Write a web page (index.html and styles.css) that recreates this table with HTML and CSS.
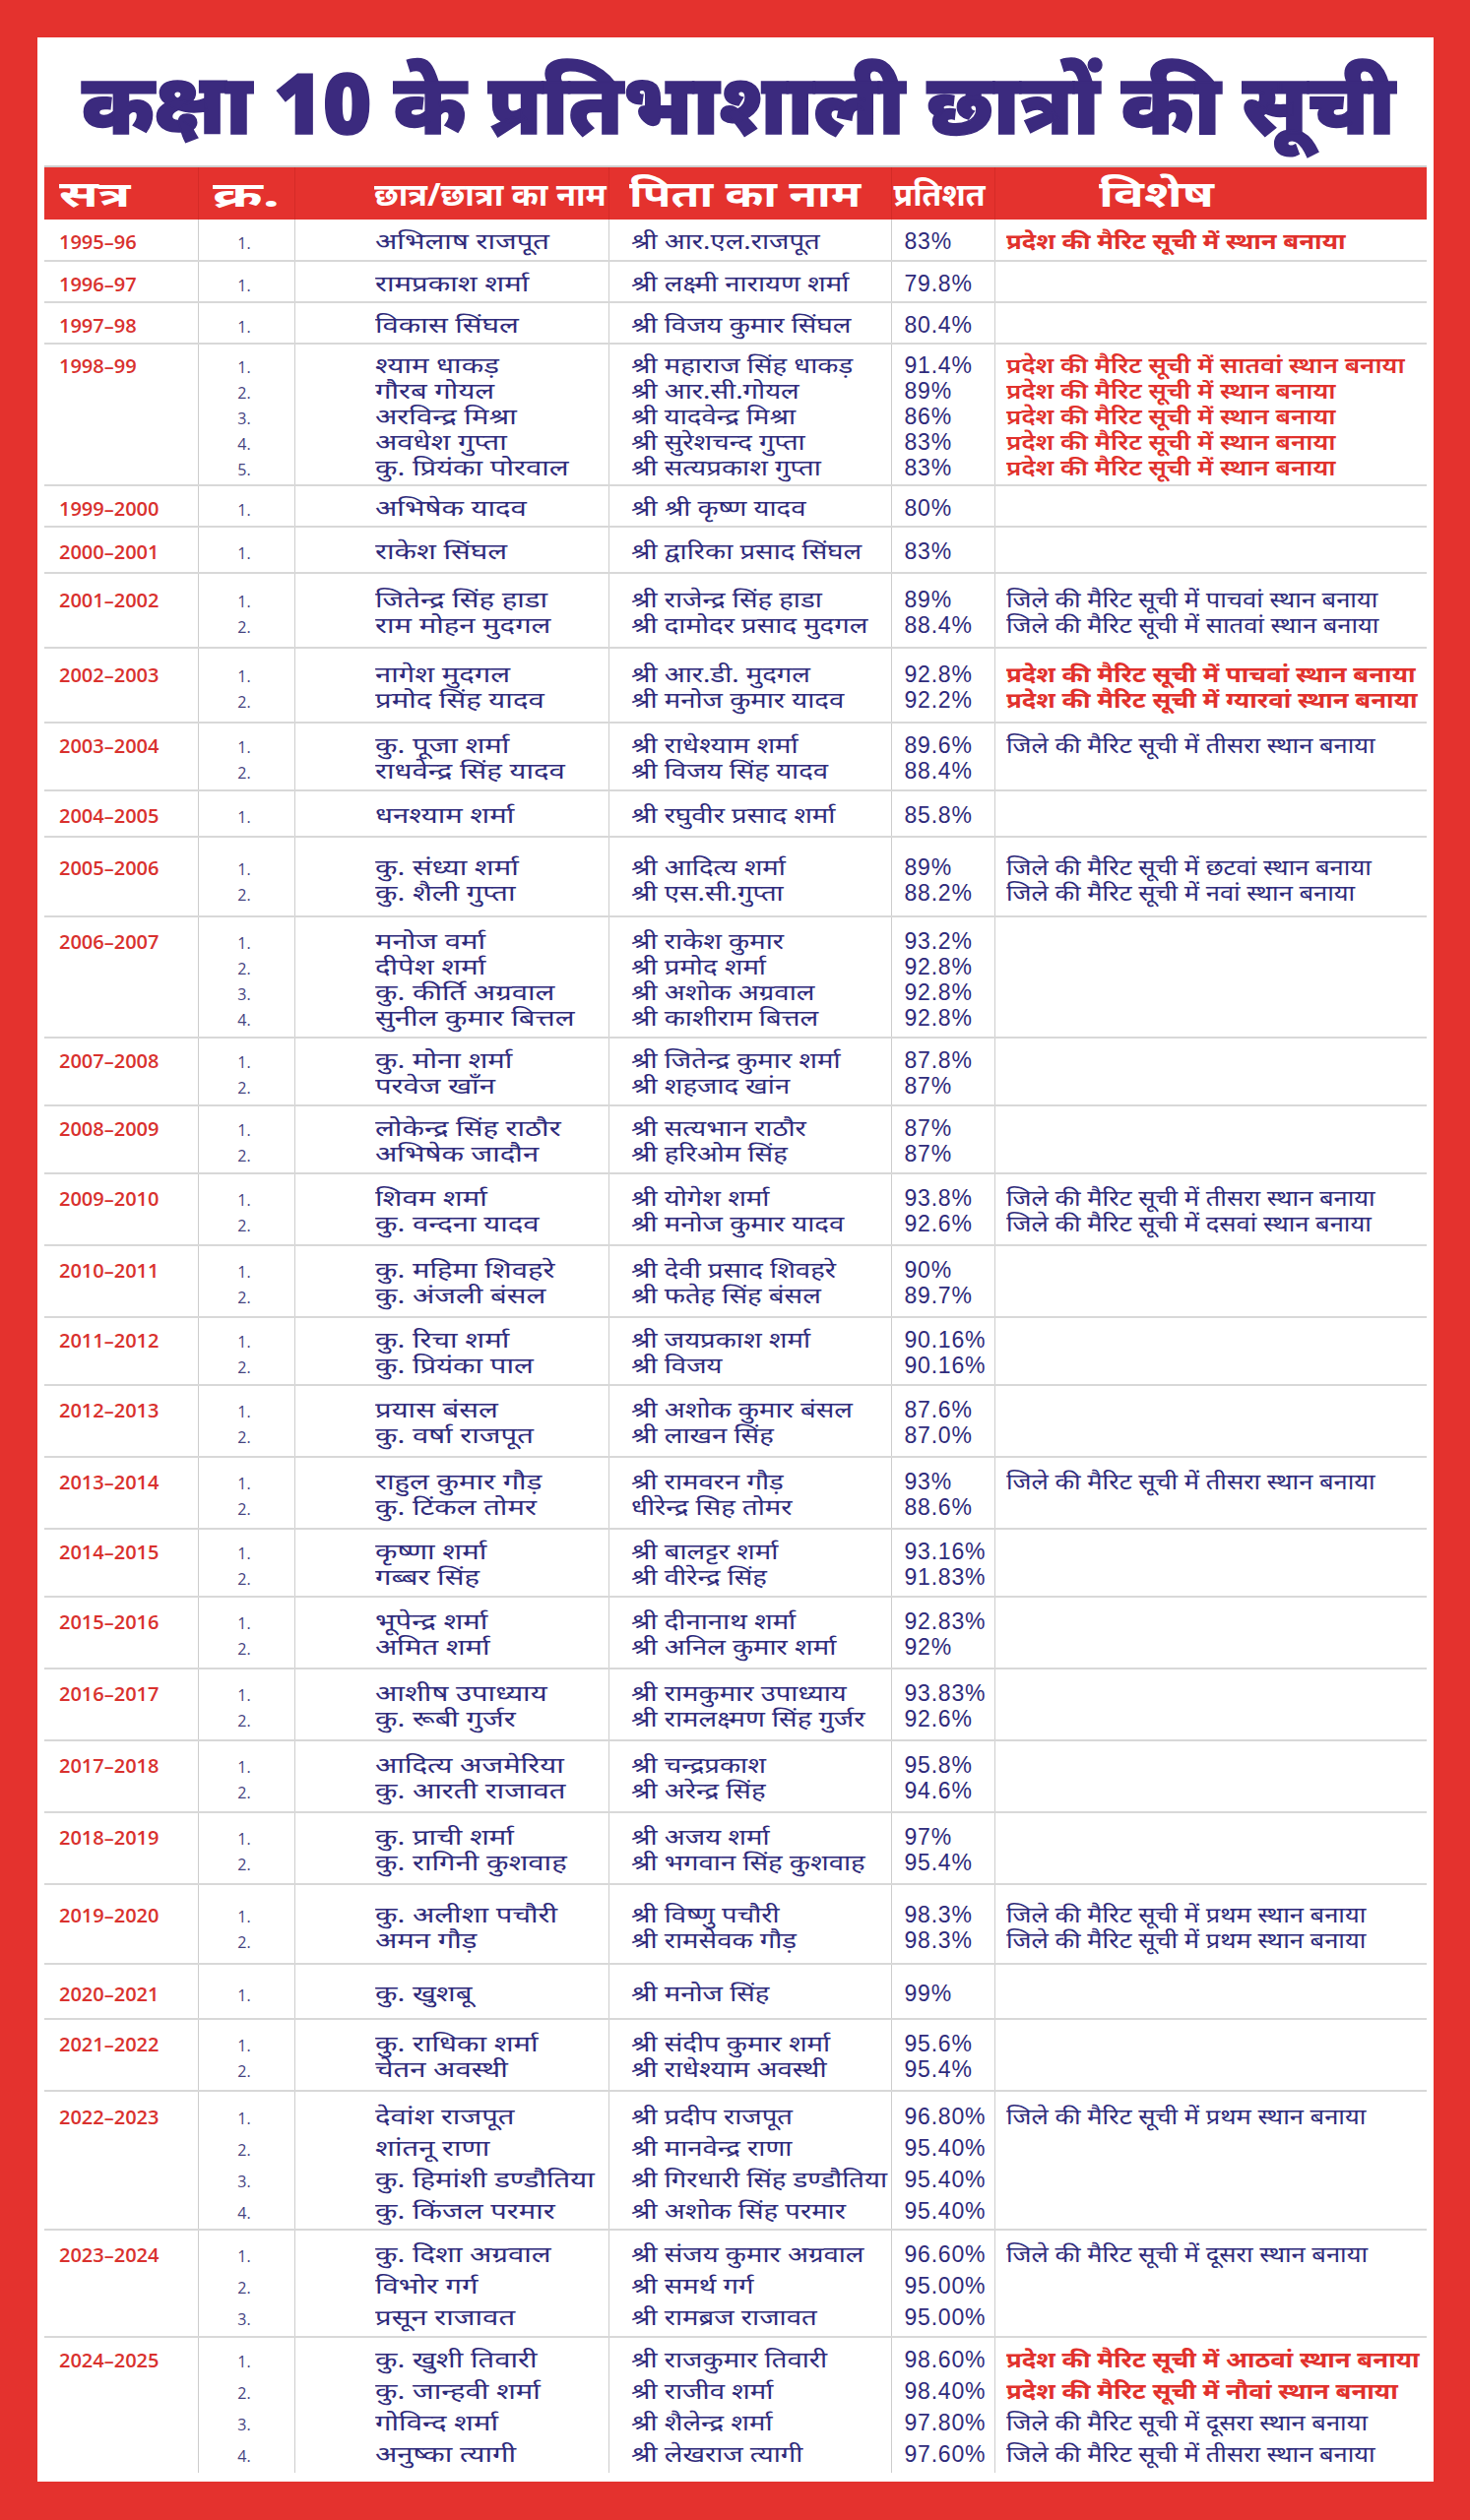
FILE: index.html
```html
<!DOCTYPE html>
<html lang="hi">
<head>
<meta charset="utf-8">
<title>कक्षा 10 के प्रतिभाशाली छात्रों की सूची</title>
<link rel="stylesheet" href="styles.css">
</head>
<body>
<div class="frame">
<div class="sheet">
<h1 class="title">कक्षा 10 के प्रतिभाशाली छात्रों की सूची</h1>
<table class="list">
<colgroup><col class="k1"><col class="k2"><col class="k3"><col class="k4"><col class="k5"><col class="k6"></colgroup>
<thead>
<tr><th class="hs"><span class="hx">सत्र</span></th><th class="hn"><span class="hx">क्र.</span></th><th class="hnm"><span class="hx">छात्र/छात्रा का नाम</span></th><th class="hf"><span class="hx">पिता का नाम</span></th><th class="hp"><span class="hx">प्रतिशत</span></th><th class="hr"><span class="hx">विशेष</span></th></tr>
</thead>
<tbody>
<tr class="r1"><td class="s">1995–96</td><td class="n"><div>1.</div></td><td class="nm"><div>अभिलाष राजपूत</div></td><td class="f"><div>श्री आर.एल.राजपूत</div></td><td class="p"><div>83%</div></td><td class="rm"><div class="pr">प्रदेश की मैरिट सूची में स्थान बनाया</div></td></tr>
<tr class="r1"><td class="s">1996–97</td><td class="n"><div>1.</div></td><td class="nm"><div>रामप्रकाश शर्मा</div></td><td class="f"><div>श्री लक्ष्मी नारायण शर्मा</div></td><td class="p"><div>79.8%</div></td><td class="rm"></td></tr>
<tr class="r1"><td class="s">1997–98</td><td class="n"><div>1.</div></td><td class="nm"><div>विकास सिंघल</div></td><td class="f"><div>श्री विजय कुमार सिंघल</div></td><td class="p"><div>80.4%</div></td><td class="rm"></td></tr>
<tr class="r5"><td class="s">1998–99</td><td class="n"><div>1.</div><div>2.</div><div>3.</div><div>4.</div><div>5.</div></td><td class="nm"><div>श्याम धाकड़</div><div>गौरब गोयल</div><div>अरविन्द्र मिश्रा</div><div>अवधेश गुप्ता</div><div>कु. प्रियंका पोरवाल</div></td><td class="f"><div>श्री महाराज सिंह धाकड़</div><div>श्री आर.सी.गोयल</div><div>श्री यादवेन्द्र मिश्रा</div><div>श्री सुरेशचन्द गुप्ता</div><div>श्री सत्यप्रकाश गुप्ता</div></td><td class="p"><div>91.4%</div><div>89%</div><div>86%</div><div>83%</div><div>83%</div></td><td class="rm"><div class="pr lite">प्रदेश की मैरिट सूची में सातवां स्थान बनाया</div><div class="pr lite">प्रदेश की मैरिट सूची में स्थान बनाया</div><div class="pr lite">प्रदेश की मैरिट सूची में स्थान बनाया</div><div class="pr lite">प्रदेश की मैरिट सूची में स्थान बनाया</div><div class="pr lite">प्रदेश की मैरिट सूची में स्थान बनाया</div></td></tr>
<tr class="r1"><td class="s">1999–2000</td><td class="n"><div>1.</div></td><td class="nm"><div>अभिषेक यादव</div></td><td class="f"><div>श्री श्री कृष्ण यादव</div></td><td class="p"><div>80%</div></td><td class="rm"></td></tr>
<tr class="r1m"><td class="s">2000–2001</td><td class="n"><div>1.</div></td><td class="nm"><div>राकेश सिंघल</div></td><td class="f"><div>श्री द्वारिका प्रसाद सिंघल</div></td><td class="p"><div>83%</div></td><td class="rm"></td></tr>
<tr class="r2x"><td class="s">2001–2002</td><td class="n"><div>1.</div><div>2.</div></td><td class="nm"><div>जितेन्द्र सिंह हाडा</div><div>राम मोहन मुदगल</div></td><td class="f"><div>श्री राजेन्द्र सिंह हाडा</div><div>श्री दामोदर प्रसाद मुदगल</div></td><td class="p"><div>89%</div><div>88.4%</div></td><td class="rm"><div class="ji">जिले की मैरिट सूची में पाचवां स्थान बनाया</div><div class="ji">जिले की मैरिट सूची में सातवां स्थान बनाया</div></td></tr>
<tr class="r2x"><td class="s">2002–2003</td><td class="n"><div>1.</div><div>2.</div></td><td class="nm"><div>नागेश मुदगल</div><div>प्रमोद सिंह यादव</div></td><td class="f"><div>श्री आर.डी. मुदगल</div><div>श्री मनोज कुमार यादव</div></td><td class="p"><div>92.8%</div><div>92.2%</div></td><td class="rm"><div class="pr">प्रदेश की मैरिट सूची में पाचवां स्थान बनाया</div><div class="pr">प्रदेश की मैरिट सूची में ग्यारवां स्थान बनाया</div></td></tr>
<tr class="r2s"><td class="s">2003–2004</td><td class="n"><div>1.</div><div>2.</div></td><td class="nm"><div>कु. पूजा शर्मा</div><div>राधवेन्द्र सिंह यादव</div></td><td class="f"><div>श्री राधेश्याम शर्मा</div><div>श्री विजय सिंह यादव</div></td><td class="p"><div>89.6%</div><div>88.4%</div></td><td class="rm"><div class="ji">जिले की मैरिट सूची में तीसरा स्थान बनाया</div></td></tr>
<tr class="r1m"><td class="s">2004–2005</td><td class="n"><div>1.</div></td><td class="nm"><div>धनश्याम शर्मा</div></td><td class="f"><div>श्री रघुवीर प्रसाद शर्मा</div></td><td class="p"><div>85.8%</div></td><td class="rm"></td></tr>
<tr class="r2l"><td class="s">2005–2006</td><td class="n"><div>1.</div><div>2.</div></td><td class="nm"><div>कु. संध्या शर्मा</div><div>कु. शैली गुप्ता</div></td><td class="f"><div>श्री आदित्य शर्मा</div><div>श्री एस.सी.गुप्ता</div></td><td class="p"><div>89%</div><div>88.2%</div></td><td class="rm"><div class="ji">जिले की मैरिट सूची में छटवां स्थान बनाया</div><div class="ji">जिले की मैरिट सूची में नवां स्थान बनाया</div></td></tr>
<tr class="r4"><td class="s">2006–2007</td><td class="n"><div>1.</div><div>2.</div><div>3.</div><div>4.</div></td><td class="nm"><div>मनोज वर्मा</div><div>दीपेश शर्मा</div><div>कु. कीर्ति अग्रवाल</div><div>सुनील कुमार बित्तल</div></td><td class="f"><div>श्री राकेश कुमार</div><div>श्री प्रमोद शर्मा</div><div>श्री अशोक अग्रवाल</div><div>श्री काशीराम बित्तल</div></td><td class="p"><div>93.2%</div><div>92.8%</div><div>92.8%</div><div>92.8%</div></td><td class="rm"></td></tr>
<tr class="r2s"><td class="s">2007–2008</td><td class="n"><div>1.</div><div>2.</div></td><td class="nm"><div>कु. मोना शर्मा</div><div>परवेज खाँन</div></td><td class="f"><div>श्री जितेन्द्र कुमार शर्मा</div><div>श्री शहजाद खांन</div></td><td class="p"><div>87.8%</div><div>87%</div></td><td class="rm"></td></tr>
<tr class="r2s"><td class="s">2008–2009</td><td class="n"><div>1.</div><div>2.</div></td><td class="nm"><div>लोकेन्द्र सिंह राठौर</div><div>अभिषेक जादौन</div></td><td class="f"><div>श्री सत्यभान राठौर</div><div>श्री हरिओम सिंह</div></td><td class="p"><div>87%</div><div>87%</div></td><td class="rm"></td></tr>
<tr class="r2"><td class="s">2009–2010</td><td class="n"><div>1.</div><div>2.</div></td><td class="nm"><div>शिवम शर्मा</div><div>कु. वन्दना यादव</div></td><td class="f"><div>श्री योगेश शर्मा</div><div>श्री मनोज कुमार यादव</div></td><td class="p"><div>93.8%</div><div>92.6%</div></td><td class="rm"><div class="ji">जिले की मैरिट सूची में तीसरा स्थान बनाया</div><div class="ji">जिले की मैरिट सूची में दसवां स्थान बनाया</div></td></tr>
<tr class="r2"><td class="s">2010–2011</td><td class="n"><div>1.</div><div>2.</div></td><td class="nm"><div>कु. महिमा शिवहरे</div><div>कु. अंजली बंसल</div></td><td class="f"><div>श्री देवी प्रसाद शिवहरे</div><div>श्री फतेह सिंह बंसल</div></td><td class="p"><div>90%</div><div>89.7%</div></td><td class="rm"></td></tr>
<tr class="r2s"><td class="s">2011–2012</td><td class="n"><div>1.</div><div>2.</div></td><td class="nm"><div>कु. रिचा शर्मा</div><div>कु. प्रियंका पाल</div></td><td class="f"><div>श्री जयप्रकाश शर्मा</div><div>श्री विजय</div></td><td class="p"><div>90.16%</div><div>90.16%</div></td><td class="rm"></td></tr>
<tr class="r2"><td class="s">2012–2013</td><td class="n"><div>1.</div><div>2.</div></td><td class="nm"><div>प्रयास बंसल</div><div>कु. वर्षा राजपूत</div></td><td class="f"><div>श्री अशोक कुमार बंसल</div><div>श्री लाखन सिंह</div></td><td class="p"><div>87.6%</div><div>87.0%</div></td><td class="rm"></td></tr>
<tr class="r2"><td class="s">2013–2014</td><td class="n"><div>1.</div><div>2.</div></td><td class="nm"><div>राहुल कुमार गौड़</div><div>कु. टिंकल तोमर</div></td><td class="f"><div>श्री रामवरन गौड़</div><div>धीरेन्द्र सिह तोमर</div></td><td class="p"><div>93%</div><div>88.6%</div></td><td class="rm"><div class="ji">जिले की मैरिट सूची में तीसरा स्थान बनाया</div></td></tr>
<tr class="r2s"><td class="s">2014–2015</td><td class="n"><div>1.</div><div>2.</div></td><td class="nm"><div>कृष्णा शर्मा</div><div>गब्बर सिंह</div></td><td class="f"><div>श्री बालट्टर शर्मा</div><div>श्री वीरेन्द्र सिंह</div></td><td class="p"><div>93.16%</div><div>91.83%</div></td><td class="rm"></td></tr>
<tr class="r2"><td class="s">2015–2016</td><td class="n"><div>1.</div><div>2.</div></td><td class="nm"><div>भूपेन्द्र शर्मा</div><div>अमित शर्मा</div></td><td class="f"><div>श्री दीनानाथ शर्मा</div><div>श्री अनिल कुमार शर्मा</div></td><td class="p"><div>92.83%</div><div>92%</div></td><td class="rm"></td></tr>
<tr class="r2"><td class="s">2016–2017</td><td class="n"><div>1.</div><div>2.</div></td><td class="nm"><div>आशीष उपाध्याय</div><div>कु. रूबी गुर्जर</div></td><td class="f"><div>श्री रामकुमार उपाध्याय</div><div>श्री रामलक्ष्मण सिंह गुर्जर</div></td><td class="p"><div>93.83%</div><div>92.6%</div></td><td class="rm"></td></tr>
<tr class="r2"><td class="s">2017–2018</td><td class="n"><div>1.</div><div>2.</div></td><td class="nm"><div>आदित्य अजमेरिया</div><div>कु. आरती राजावत</div></td><td class="f"><div>श्री चन्द्रप्रकाश</div><div>श्री अरेन्द्र सिंह</div></td><td class="p"><div>95.8%</div><div>94.6%</div></td><td class="rm"></td></tr>
<tr class="r2"><td class="s">2018–2019</td><td class="n"><div>1.</div><div>2.</div></td><td class="nm"><div>कु. प्राची शर्मा</div><div>कु. रागिनी कुशवाह</div></td><td class="f"><div>श्री अजय शर्मा</div><div>श्री भगवान सिंह कुशवाह</div></td><td class="p"><div>97%</div><div>95.4%</div></td><td class="rm"></td></tr>
<tr class="r2l"><td class="s">2019–2020</td><td class="n"><div>1.</div><div>2.</div></td><td class="nm"><div>कु. अलीशा पचौरी</div><div>अमन गौड़</div></td><td class="f"><div>श्री विष्णु पचौरी</div><div>श्री रामसेवक गौड़</div></td><td class="p"><div>98.3%</div><div>98.3%</div></td><td class="rm"><div class="ji">जिले की मैरिट सूची में प्रथम स्थान बनाया</div><div class="ji">जिले की मैरिट सूची में प्रथम स्थान बनाया</div></td></tr>
<tr class="r1l"><td class="s">2020–2021</td><td class="n"><div>1.</div></td><td class="nm"><div>कु. खुशबू</div></td><td class="f"><div>श्री मनोज सिंह</div></td><td class="p"><div>99%</div></td><td class="rm"></td></tr>
<tr class="r2"><td class="s">2021–2022</td><td class="n"><div>1.</div><div>2.</div></td><td class="nm"><div>कु. राधिका शर्मा</div><div>चेतन अवस्थी</div></td><td class="f"><div>श्री संदीप कुमार शर्मा</div><div>श्री राधेश्याम अवस्थी</div></td><td class="p"><div>95.6%</div><div>95.4%</div></td><td class="rm"></td></tr>
<tr class="w4a"><td class="s">2022–2023</td><td class="n"><div>1.</div><div>2.</div><div>3.</div><div>4.</div></td><td class="nm"><div>देवांश राजपूत</div><div>शांतनू राणा</div><div>कु. हिमांशी डण्डौतिया</div><div>कु. किंजल परमार</div></td><td class="f"><div>श्री प्रदीप राजपूत</div><div>श्री मानवेन्द्र राणा</div><div>श्री गिरधारी सिंह डण्डौतिया</div><div>श्री अशोक सिंह परमार</div></td><td class="p"><div>96.80%</div><div>95.40%</div><div>95.40%</div><div>95.40%</div></td><td class="rm"><div class="ji">जिले की मैरिट सूची में प्रथम स्थान बनाया</div></td></tr>
<tr class="w3"><td class="s">2023–2024</td><td class="n"><div>1.</div><div>2.</div><div>3.</div></td><td class="nm"><div>कु. दिशा अग्रवाल</div><div>विभोर गर्ग</div><div>प्रसून राजावत</div></td><td class="f"><div>श्री संजय कुमार अग्रवाल</div><div>श्री समर्थ गर्ग</div><div>श्री रामब्रज राजावत</div></td><td class="p"><div>96.60%</div><div>95.00%</div><div>95.00%</div></td><td class="rm"><div class="ji">जिले की मैरिट सूची में दूसरा स्थान बनाया</div></td></tr>
<tr class="w4b"><td class="s">2024–2025</td><td class="n"><div>1.</div><div>2.</div><div>3.</div><div>4.</div></td><td class="nm"><div>कु. खुशी तिवारी</div><div>कु. जान्हवी शर्मा</div><div>गोविन्द शर्मा</div><div>अनुष्का त्यागी</div></td><td class="f"><div>श्री राजकुमार तिवारी</div><div>श्री राजीव शर्मा</div><div>श्री शैलेन्द्र शर्मा</div><div>श्री लेखराज त्यागी</div></td><td class="p"><div>98.60%</div><div>98.40%</div><div>97.80%</div><div>97.60%</div></td><td class="rm"><div class="pr">प्रदेश की मैरिट सूची में आठवां स्थान बनाया</div><div class="pr">प्रदेश की मैरिट सूची में नौवां स्थान बनाया</div><div class="ji">जिले की मैरिट सूची में दूसरा स्थान बनाया</div><div class="ji">जिले की मैरिट सूची में तीसरा स्थान बनाया</div></td></tr>
</tbody>
</table>
</div>
</div>
</body>
</html>
```
FILE: styles.css
```css
body {
  margin: 0;
  background: #e4322e;
}

.frame {
  width: 1493px;
  height: 2560px;
  box-sizing: border-box;
  background: #e4322e;
  padding: 38px 37px 39px 38px;
}

.sheet {
  background: #ffffff;
  height: 100%;
  display: flex;
  flex-direction: column;
}

.title {
  margin: 0;
  height: 130px;
  display: flex;
  align-items: center;
  justify-content: center;
  font-family: "Noto Sans", sans-serif;
  font-weight: 900;
  font-size: 85px;
  line-height: 1;
  color: #3b2a7e;
  -webkit-text-stroke: 1.5px #3b2a7e;
  padding-right: 0;
  padding-left: 6px;
}

.list {
  margin-left: 7px;
  width: 1404px;
  border-collapse: collapse;
  table-layout: fixed;
  font-family: "Noto Sans", sans-serif;
  color: #2f2b7b;
}

.k1 { width: 156px; }
.k2 { width: 98px; }
.k3 { width: 319px; }
.k4 { width: 287px; }
.k5 { width: 105px; }
.k6 { width: 439px; }

.list thead tr {
  height: 54px;
  background: #e4322e;
  border-top: 2px solid #cfcfcf;
}

.list th {
  color: #ffffff;
  font-weight: 700;
  font-size: 36px;
  line-height: 40px;
  text-align: left;
  padding: 0;
  white-space: nowrap;
  border-right: 1px solid #d42b27;
}

.list th:last-child { border-right: 0; }

.hx {
  display: inline-block;
  transform-origin: 0 50%;
  transform: scaleX(var(--sx, 1));
}

.hs { padding-left: 15px !important; --sx: 1.5; }
.hn { padding-left: 14px !important; --sx: 1.7; }
.hnm { padding-left: 80px !important; font-size: 32px !important; --sx: 1.02; }
.hf { padding-left: 20px !important; --sx: 1.3; }
.hp { padding-left: 2px !important; font-size: 32px !important; --sx: 1; }
.hr { padding-left: 105px !important; --sx: 1.42; }

.list tbody tr {
  border-bottom: 2px solid #d8d8d8;
}

.list tbody tr:last-child { border-bottom: 0; }

.list td {
  vertical-align: baseline;
  padding: 0;
  border-right: 1px solid #cdcdcd;
  line-height: 26px;
  white-space: nowrap;
}

.list td:last-child { border-right: 0; }

.s {
  font-family: "Open Sans", sans-serif;
  font-weight: 600;
  font-size: 20px;
  color: #d9312e;
  padding-left: 15px !important;
}

.n {
  font-family: "Open Sans", sans-serif;
  font-size: 16px;
  color: #45437f;
  text-align: center;
  padding-right: 4px !important;
}

.nm {
  font-size: 22px;
  padding-left: 81px !important;
}

.nm div {
  transform-origin: 0 50%;
  transform: scaleX(1.33);
}

.f {
  font-size: 22px;
  padding-left: 22px !important;
}

.f div {
  transform-origin: 0 50%;
  transform: scaleX(1.25);
}

.p {
  font-family: "Liberation Sans", Arial, sans-serif;
  font-size: 23px;
  letter-spacing: 0.8px;
  padding-left: 13px !important;
}

.rm {
  font-size: 22px;
  padding-left: 11px !important;
}

.rm div {
  transform-origin: 0 50%;
  transform: scaleX(1.16);
}

.rm .pr {
  color: #e1312c;
  font-weight: 700;
  transform: scaleX(1.17);
}

.rm .pr.lite { font-weight: 600; }

.ji {
  color: #2f2b7b;
}

/* row heights and vertical centring of the content block */
.r1 { height: 42px; }
.r1 > td { padding-top: 8px; }
.r1m { height: 47px; }
.r1m > td { padding-top: 10px; }
.r1l { height: 56px; }
.r1l > td { padding-top: 15px; }
.r2 { height: 73px; }
.r2 > td { padding-top: 10px; }
.r2s { height: 69px; }
.r2s > td { padding-top: 8px; }
.r2x { height: 76px; }
.r2x > td { padding-top: 12px; }
.r2l { height: 81px; }
.r2l > td { padding-top: 16px; }
.r4 { height: 123px; }
.r4 > td { padding-top: 10px; }
.r5 { height: 144px; }
.r5 > td { padding-top: 7px; }

.w4a td, .w3 td, .w4b td { line-height: 32px; }
.w4a { height: 139px; }
.w4a > td { padding-top: 8px; }
.w3 { height: 109px; }
.w3 > td { padding-top: 7px; }
.w4b { height: 138px; }
.w4b > td { padding-top: 5px; }
```
